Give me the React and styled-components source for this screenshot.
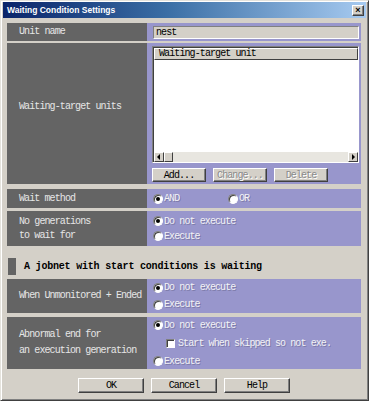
import React from 'react';
import styled, { createGlobalStyle } from 'styled-components';

const GlobalStyle = createGlobalStyle`
    html, body {
        margin: 0;
        padding: 0;
        background: #ffffff;
    }
    body {
        width: 371px;
        height: 404px;
        overflow: hidden;
    }
`;

const mono = `"Liberation Mono", "DejaVu Sans Mono", monospace`;

const Window = styled.div`
    box-sizing: border-box;
    width: 369px;
    height: 401px;
    background: #d4d0c8;
    border: 1px solid;
    border-color: #e4e2dc #404040 #404040 #e4e2dc;
    box-shadow: inset 1px 1px #ffffff, inset -1px -1px #808080;
    padding: 1px 2px 2px 2px;
    display: flex;
    flex-direction: column;
`;

const TitleBar = styled.div`
    height: 16px;
    display: flex;
    align-items: center;
    justify-content: space-between;
    padding: 0 2px 0 4px;
    background: linear-gradient(to right, #0a246a, #3a6ea5 45%, #a6caf0);
`;

const Title = styled.span`
    font-family: "Liberation Sans", Arial, sans-serif;
    font-weight: bold;
    font-size: 8.5px;
    color: #ffffff;
`;

const CloseButton = styled.div`
    box-sizing: border-box;
    width: 12px;
    height: 11px;
    background: #d4d0c8;
    border: 1px solid;
    border-color: #ffffff #404040 #404040 #ffffff;
    box-shadow: inset -1px -1px #808080;
    display: flex;
    align-items: center;
    justify-content: center;
    font-family: "Liberation Sans", Arial, sans-serif;
    font-weight: bold;
    font-size: 9px;
    line-height: 1;
    color: #000;
`;

const Content = styled.div`
    display: flex;
    flex-direction: column;
    padding: 0 5px 0 4px;
`;

const Group = styled.div`
    display: flex;
    flex-direction: column;
    gap: ${p => p.gap || 3}px;
    margin-top: ${p => p.top}px;
`;

const Row = styled.div`
    display: grid;
    grid-template-columns: 140px 1fr;
    height: ${p => p.h}px;
`;

const Label = styled.div`
    background: #646464;
    color: #e6e6e6;
    font-family: ${mono};
    font-size: 10px;
    letter-spacing: -0.9px;
    line-height: ${p => p.lh || 14}px;
    padding: 0 0 ${p => p.pb || 0}px 12px;
    display: flex;
    flex-direction: column;
    justify-content: center;
`;

const Cell = styled.div`
    background: #9896cc;
    display: flex;
    flex-direction: ${p => (p.row ? 'row' : 'column')};
    justify-content: ${p => (p.row ? 'flex-start' : 'center')};
    align-items: ${p => (p.row ? 'center' : 'stretch')};
    gap: ${p => p.gap || 0}px;
    padding: ${p => p.pad || '0 2px 0 6px'};
`;

const TextInput = styled.div`
    box-sizing: border-box;
    height: 13px;
    background: #d4d0c8;
    border: 1px solid;
    border-color: #808080 #ffffff #ffffff #808080;
    font-family: ${mono};
    font-size: 10px;
    letter-spacing: -0.9px;
    line-height: 11px;
    padding-left: 2px;
    color: #000;
`;

const ListBox = styled.div`
    box-sizing: border-box;
    height: 117px;
    border: 1px solid;
    border-color: #808080 #ffffff #ffffff #808080;
    box-shadow: inset 1px 1px #404040;
    background: #ffffff;
    display: flex;
    flex-direction: column;
    padding: 1px 0 0 1px;
`;

const ListHeader = styled.div`
    box-sizing: border-box;
    height: 12px;
    background: #d4d0c8;
    border: 1px solid;
    border-color: #ffffff #404040 #404040 #ffffff;
    font-family: ${mono};
    font-size: 10px;
    letter-spacing: -0.9px;
    line-height: 10px;
    padding-left: 4px;
    color: #000;
`;

const ListBody = styled.div`
    flex: 1;
    background: #ffffff;
`;

const ScrollBar = styled.div`
    height: 10px;
    display: flex;
    background: #e8e6e0;
`;

const ScrollArrow = styled.div`
    box-sizing: border-box;
    width: 10px;
    height: 10px;
    background: #d4d0c8;
    border: 1px solid;
    border-color: #ffffff #404040 #404040 #ffffff;
    display: flex;
    align-items: center;
    justify-content: center;
    margin-left: ${p => (p.right ? 'auto' : '0')};
`;

const Thumb = styled.div`
    box-sizing: border-box;
    width: 9px;
    height: 10px;
    background: #d4d0c8;
    border: 1px solid;
    border-color: #ffffff #404040 #404040 #ffffff;
`;

const ButtonRow = styled.div`
    display: flex;
    gap: ${p => p.gap || 7}px;
    margin-top: ${p => p.top || 0}px;
    justify-content: ${p => p.center ? 'center' : 'flex-start'};
`;

const Button = styled.div`
    box-sizing: border-box;
    width: ${p => p.w || 54}px;
    height: ${p => p.h || 14}px;
    background: #d4d0c8;
    border: 1px solid;
    border-color: #ffffff #404040 #404040 #ffffff;
    box-shadow: inset -1px -1px #808080;
    font-family: ${mono};
    font-size: 10px;
    letter-spacing: -0.9px;
    display: flex;
    align-items: center;
    justify-content: center;
    color: ${p => (p.disabled ? '#8a8a8a' : '#000')};
    text-shadow: ${p => (p.disabled ? '1px 1px 0 #ffffff' : 'none')};
`;

const Option = styled.div`
    display: flex;
    align-items: center;
    height: 12px;
    width: ${p => (p.w ? `${p.w}px` : 'auto')};
    padding-left: ${p => p.indent || 0}px;
    font-family: ${mono};
    font-size: 10px;
    letter-spacing: -0.9px;
    color: #f2f2f6;
    text-shadow: 1px 1px 0 #7c7aa8;
    white-space: nowrap;
`;

const Radio = styled.span`
    box-sizing: border-box;
    position: relative;
    width: 10px;
    height: 10px;
    border-radius: 50%;
    background: #ffffff;
    border: 1px solid;
    border-color: #808080 #ffffff #ffffff #808080;
    box-shadow: inset 1px 1px #404040;
    margin-right: 1px;
    flex-shrink: 0;

    &::after {
        content: '';
        display: ${p => (p.checked ? 'block' : 'none')};
        position: absolute;
        left: 2px;
        top: 2px;
        width: 4px;
        height: 4px;
        border-radius: 50%;
        background: #000;
    }
`;

const CheckBox = styled.span`
    box-sizing: border-box;
    width: 9px;
    height: 9px;
    background: #ffffff;
    border: 1px solid;
    border-color: #808080 #ffffff #ffffff #808080;
    box-shadow: inset 1px 1px #404040;
    margin-right: 3px;
    flex-shrink: 0;
`;

const Header = styled.div`
    display: flex;
    align-items: center;
    gap: 8px;
    height: 17px;
    margin: 12px 0 0 1px;
`;

const HeaderMark = styled.div`
    width: 8px;
    height: 17px;
    background: #646464;
`;

const HeaderText = styled.span`
    font-family: ${mono};
    font-weight: bold;
    font-size: 10px;
    letter-spacing: -0.2px;
    color: #000;
`;

const Arrow = ({ dir }) => (
    <svg width="4" height="6" viewBox="0 0 4 6">
        {dir === 'left'
            ? <polygon points="3,0 0,3 3,6" fill="#000" />
            : <polygon points="1,0 4,3 1,6" fill="#000" />}
    </svg>
);

const App = () => (
    <>
        <GlobalStyle />
        <Window>
            <TitleBar>
                <Title>Waiting Condition Settings</Title>
                <CloseButton>×</CloseButton>
            </TitleBar>
            <Content>
                <Group top={5} gap={2}>
                    <Row h={18}>
                        <Label>Unit name</Label>
                        <Cell pad="0 2px 0 6px">
                            <TextInput>nest</TextInput>
                        </Cell>
                    </Row>
                    <Row h={141}>
                        <Label pb={14}>Waiting-target units</Label>
                        <Cell pad="3px 2px 0 5px" style={{ justifyContent: 'flex-start' }}>
                            <ListBox>
                                <ListHeader>Waiting-target unit</ListHeader>
                                <ListBody />
                                <ScrollBar>
                                    <ScrollArrow><Arrow dir="left" /></ScrollArrow>
                                    <Thumb />
                                    <ScrollArrow right><Arrow dir="right" /></ScrollArrow>
                                </ScrollBar>
                            </ListBox>
                            <ButtonRow top={5}>
                                <Button>Add...</Button>
                                <Button disabled>Change...</Button>
                                <Button disabled>Delete</Button>
                            </ButtonRow>
                        </Cell>
                    </Row>
                </Group>

                <Group top={5} gap={3}>
                    <Row h={19}>
                        <Label>Wait method</Label>
                        <Cell row pad="0 0 0 6px">
                            <Option w={75}><Radio checked />AND</Option>
                            <Option><Radio />OR</Option>
                        </Cell>
                    </Row>
                    <Row h={35}>
                        <Label>
                            <span>No generations</span>
                            <span>to wait for</span>
                        </Label>
                        <Cell gap={3}>
                            <Option><Radio checked />Do not execute</Option>
                            <Option><Radio />Execute</Option>
                        </Cell>
                    </Row>
                </Group>

                <Header>
                    <HeaderMark />
                    <HeaderText>A jobnet with start conditions is waiting</HeaderText>
                </Header>

                <Group top={4} gap={4}>
                    <Row h={34}>
                        <Label>When Unmonitored + Ended</Label>
                        <Cell gap={5}>
                            <Option><Radio checked />Do not execute</Option>
                            <Option><Radio />Execute</Option>
                        </Cell>
                    </Row>
                    <Row h={52}>
                        <Label lh={16}>
                            <span>Abnormal end for</span>
                            <span>an execution generation</span>
                        </Label>
                        <Cell gap={6}>
                            <Option><Radio checked />Do not execute</Option>
                            <Option indent={13}><CheckBox />Start when skipped so not exe.</Option>
                            <Option><Radio />Execute</Option>
                        </Cell>
                    </Row>
                </Group>

                <ButtonRow top={9} center>
                    <Button w={66} h={15}>OK</Button>
                    <Button w={66} h={15}>Cancel</Button>
                    <Button w={66} h={15}>Help</Button>
                </ButtonRow>
            </Content>
        </Window>
    </>
);

export default App;
